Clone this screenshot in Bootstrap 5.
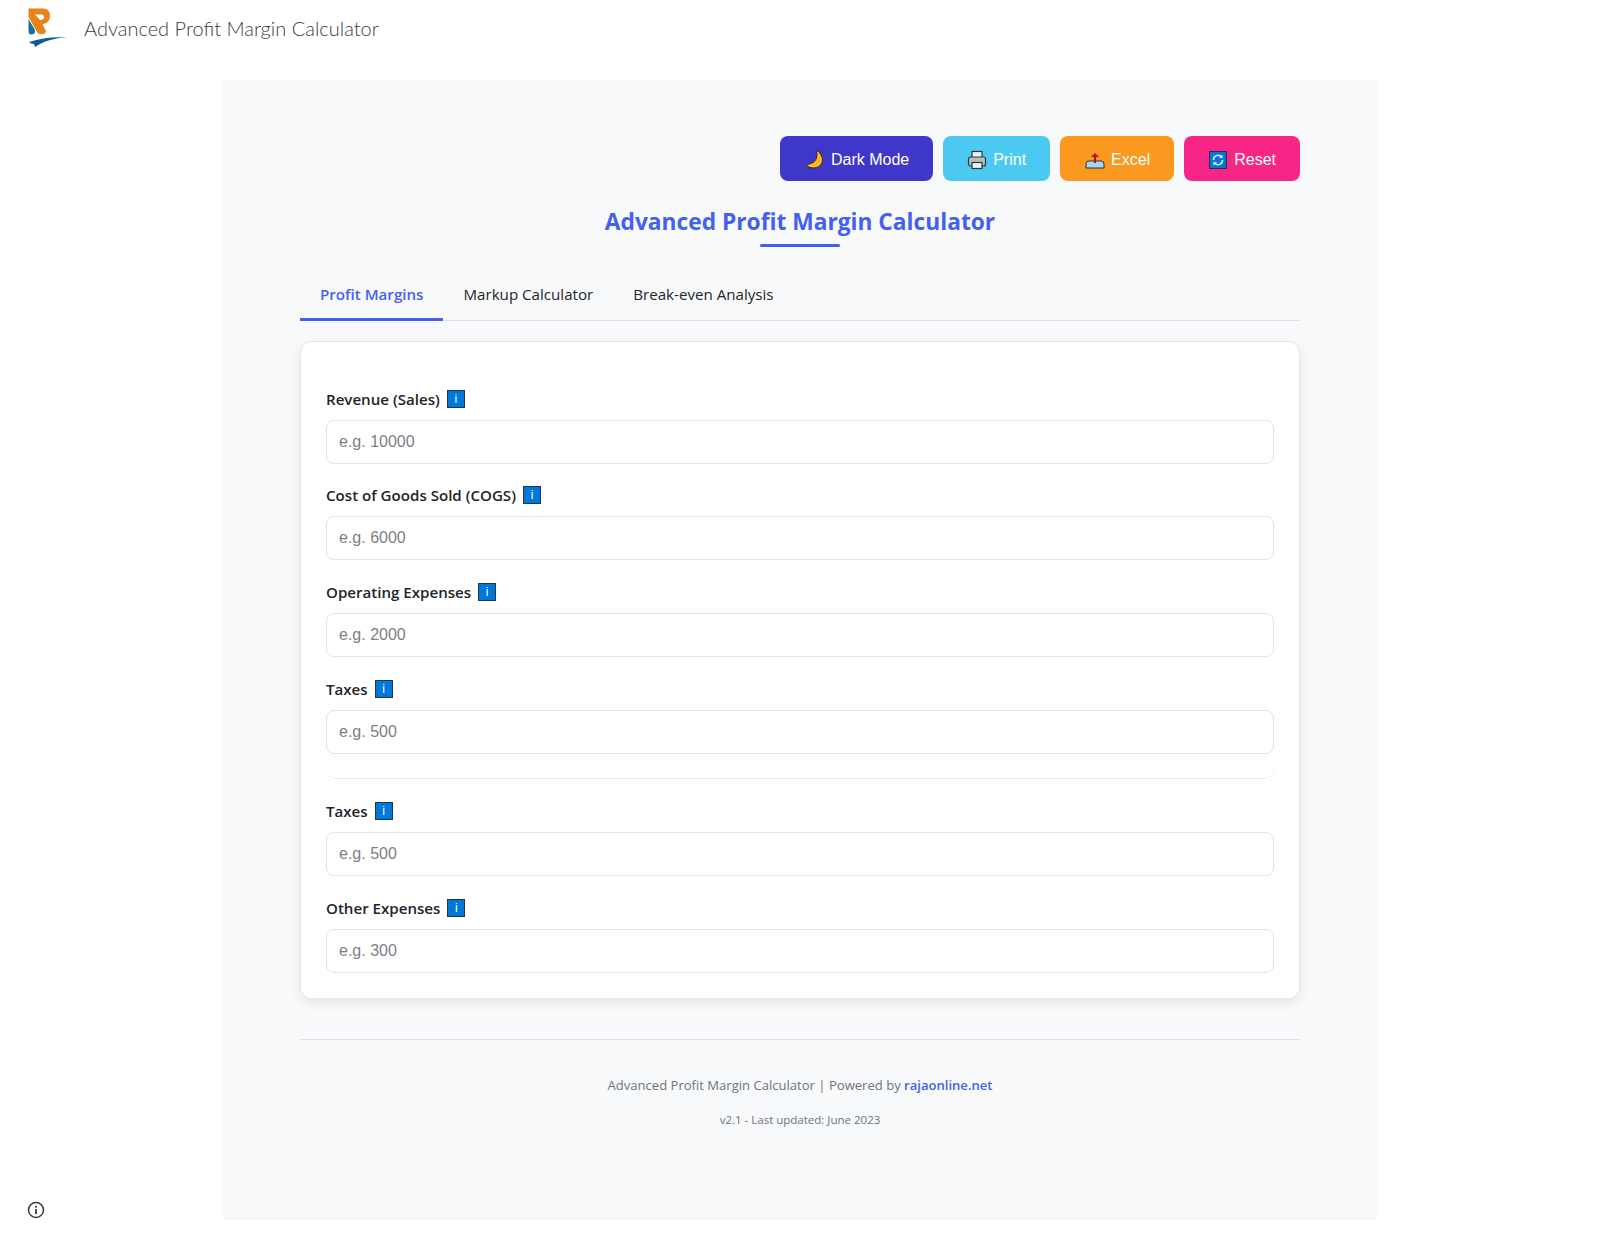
<!DOCTYPE html>
<html lang="en">
<head>
<meta charset="utf-8">
<title>Advanced Profit Margin Calculator</title>
<link href="https://cdn.jsdelivr.net/npm/bootstrap@5.3.0/dist/css/bootstrap.min.css" rel="stylesheet">
<style>
body{background:#fff;font-family:"Open Sans","Noto Sans",sans-serif;color:#212529;min-height:1243px;position:relative}
.site-head{height:80px;padding:8px 0 0 27px;gap:16px}
.site-logo{width:41px;height:41px}
.site-name{font-family:Lato,sans-serif;font-weight:300;font-size:20px;line-height:30px;color:#3c3c3c;margin:5px 0 0 0}
.calc-wrap{width:1154px;margin:0 auto;background:#f8f9fa;padding:56px 77px 0;height:1139.500px}
.tool-btn{height:45px;padding:2px 24px 0;border:0;border-radius:8px;color:#fff;font-family:"Liberation Sans",sans-serif;font-size:16px;gap:6px;--bs-btn-color:#fff;--bs-btn-hover-color:#fff}
.tool-row{gap:10px}
.tool-dark{background:#3f37c9;padding-left:25px}
.tool-print{background:#4cc9f0}
.tool-excel{background:#fb9820;padding-left:25px}
.tool-reset{background:#f72585}
.tool-btn svg{width:20px;height:20px;flex:none}
.calc-title{color:#4361ee;font-size:22.75px;font-weight:700;text-align:center;margin:24px 0 0;line-height:34px;position:relative;padding-bottom:8px}
.calc-title::after{content:"";position:absolute;left:50%;bottom:0;width:80px;height:3px;margin-left:-40px;background:#4361ee;border-radius:2px}
.calc-tabs{margin-top:23px;border-bottom:1.500px solid #dee2e6;gap:0}
.calc-tabs .nav-link{border:0;border-bottom:3px solid transparent;border-radius:0;background:none;color:#212529;font-size:15.130px;padding:12px 20px;margin-bottom:-1.500px;line-height:24px}
.calc-tabs .nav-link.active{background:none;color:#4361ee;font-weight:600;border-bottom-color:#4361ee}
.calc-card{margin-top:20px;border:1px solid #e3e6ea;border-radius:12px;box-shadow:0 4px 12px rgba(0,0,0,.08);padding:45px 25px 25px;background:#fff}
.calc-field{margin-bottom:19.800px}
.calc-field:last-child{margin-bottom:0}
.calc-label{font-weight:600;font-size:15.100px;line-height:24px;margin:0 0 9px;color:#212529;display:flex;align-items:center;gap:7px}
.info-mark{width:18px;height:18px;background:#0078d7;border:1px solid #26364a;color:#fff;font:12px/16px "Liberation Sans",sans-serif;text-align:center;display:inline-block}
.calc-input{height:44px;border:1.6px solid #e1e4ea;border-radius:8px;padding:0 12px;font-family:"Liberation Sans",sans-serif;font-size:16px}
.calc-input::placeholder{color:#7a8087;opacity:1}
.calc-sliver{height:25px;margin:-19.800px 0 20.400px;border-bottom:1px solid #e6e9ef;border-radius:0 0 10px 10px}
.calc-rule{margin:40px 0 0;border:0;border-top:1px solid #dee2e6;opacity:1}
.calc-foot{text-align:center;color:#6c757d;font-size:13.070px;margin-top:27px;line-height:36px}
.calc-foot a{color:#4361ee;font-weight:600;text-decoration:none}
.calc-ver{font-size:11.500px;line-height:18px;margin-top:8px}
.privacy-mark{position:absolute;left:27px;top:1201px;width:18px;height:18px}
</style>
</head>
<body>
<header class="site-head d-flex align-items-start">
  <svg class="site-logo" viewBox="0 0 41 41" aria-label="logo">
    <path d="M1.500 11 8 22Q8.500 26 5 26.500Q1.500 27 1.500 23Z" fill="#1a6da8"/>
    <path d="M1.500.5H17Q23 1 23 8Q23 14 17 16L15.500 16.500 19 23Q18 27 13 26Q11 26 10 24L1.500 9Z" fill="#e8831c"/>
    <path d="M8 6.500H15Q17 7 17 9.500Q16.500 12 13 12Z" fill="#fff"/>
    <path d="M2 34Q20 28 40 29.500Q24 30 13 36L8 39 7 36Q4 36 2 34Z" fill="#0d5a96"/>
  </svg>
  <p class="site-name">Advanced Profit Margin Calculator</p>
</header>
<main class="calc-wrap">
  <div class="d-flex justify-content-end tool-row">
    <button class="btn tool-btn tool-dark d-flex align-items-center"><svg viewBox="0 0 20 20"><path d="M13 1Q21 9 15 16Q9 20 1.500 16Q1 14.500 4 14Q10 13 11.500 8Q12.500 4.500 11.500 2Z" fill="#fdb827" stroke="#3a2a10" stroke-width="1"/></svg>Dark Mode</button>
    <button class="btn tool-btn tool-print d-flex align-items-center"><svg viewBox="0 0 20 20"><rect x="5" y="1.500" width="10" height="7" fill="#eef1f3" stroke="#2c3a40" stroke-width="1.200"/><rect x="1.500" y="7" width="17" height="9" rx="2" fill="#b9bfc0" stroke="#2c3a40" stroke-width="1.200"/><rect x="5" y="12.500" width="10" height="6" fill="#eef1f3" stroke="#2c3a40" stroke-width="1.200"/></svg>Print</button>
    <button class="btn tool-btn tool-excel d-flex align-items-center"><svg viewBox="0 0 20 20"><path d="M1 14Q1 11 4 11H16Q19 11 19 14V18H1Z" fill="#a6d4f2" stroke="#26323a"/><path d="M10 13V6" stroke="#b3121d" stroke-width="2"/><path d="M6 7 10 3 14 7Z" fill="#b3121d"/></svg>Excel</button>
    <button class="btn tool-btn tool-reset d-flex align-items-center"><svg viewBox="0 0 20 20"><rect x="1.500" y="1.500" width="17" height="17" fill="#0078d7" stroke="#27304a"/><path d="M5.500 10A4.500 4.500 0 0 1 13.500 7M14.500 10A4.500 4.500 0 0 1 6.500 13" fill="none" stroke="#dff1ff" stroke-width="1.500"/><path d="M14.500 4.500V8H11ZM5.500 15.500V12H9Z" fill="#dff1ff"/></svg>Reset</button>
  </div>
  <h1 class="calc-title">Advanced Profit Margin Calculator</h1>
  <ul class="nav nav-tabs calc-tabs">
    <li class="nav-item"><a class="nav-link active" href="#">Profit Margins</a></li>
    <li class="nav-item"><a class="nav-link" href="#">Markup Calculator</a></li>
    <li class="nav-item"><a class="nav-link" href="#">Break-even Analysis</a></li>
  </ul>
  <div class="card calc-card">
    <div class="calc-field"><label class="calc-label">Revenue (Sales) <span class="info-mark">i</span></label><input class="form-control calc-input" placeholder="e.g. 10000"></div>
    <div class="calc-field"><label class="calc-label">Cost of Goods Sold (COGS) <span class="info-mark">i</span></label><input class="form-control calc-input" placeholder="e.g. 6000"></div>
    <div class="calc-field"><label class="calc-label">Operating Expenses <span class="info-mark">i</span></label><input class="form-control calc-input" placeholder="e.g. 2000"></div>
    <div class="calc-field"><label class="calc-label">Taxes <span class="info-mark">i</span></label><input class="form-control calc-input" placeholder="e.g. 500"></div>
    <div class="calc-sliver"></div>
    <div class="calc-field"><label class="calc-label">Taxes <span class="info-mark">i</span></label><input class="form-control calc-input" placeholder="e.g. 500"></div>
    <div class="calc-field"><label class="calc-label">Other Expenses <span class="info-mark">i</span></label><input class="form-control calc-input" placeholder="e.g. 300"></div>
  </div>
  <hr class="calc-rule">
  <footer class="calc-foot">
    <div>Advanced Profit Margin Calculator | Powered by <a href="#">rajaonline.net</a></div>
    <div class="calc-ver">v2.1 - Last updated: June 2023</div>
  </footer>
</main>
<svg class="privacy-mark" viewBox="0 0 18 18" aria-label="info"><circle cx="9" cy="9" r="7.500" fill="none" stroke="#3c4043" stroke-width="1.600"/><rect x="8.100" y="8" width="1.800" height="5.200" fill="#3c4043"/><rect x="8.100" y="4.800" width="1.800" height="1.800" fill="#3c4043"/></svg>
<script src="https://cdn.jsdelivr.net/npm/bootstrap@5.3.0/dist/js/bootstrap.bundle.min.js"></script>
</body>
</html>
